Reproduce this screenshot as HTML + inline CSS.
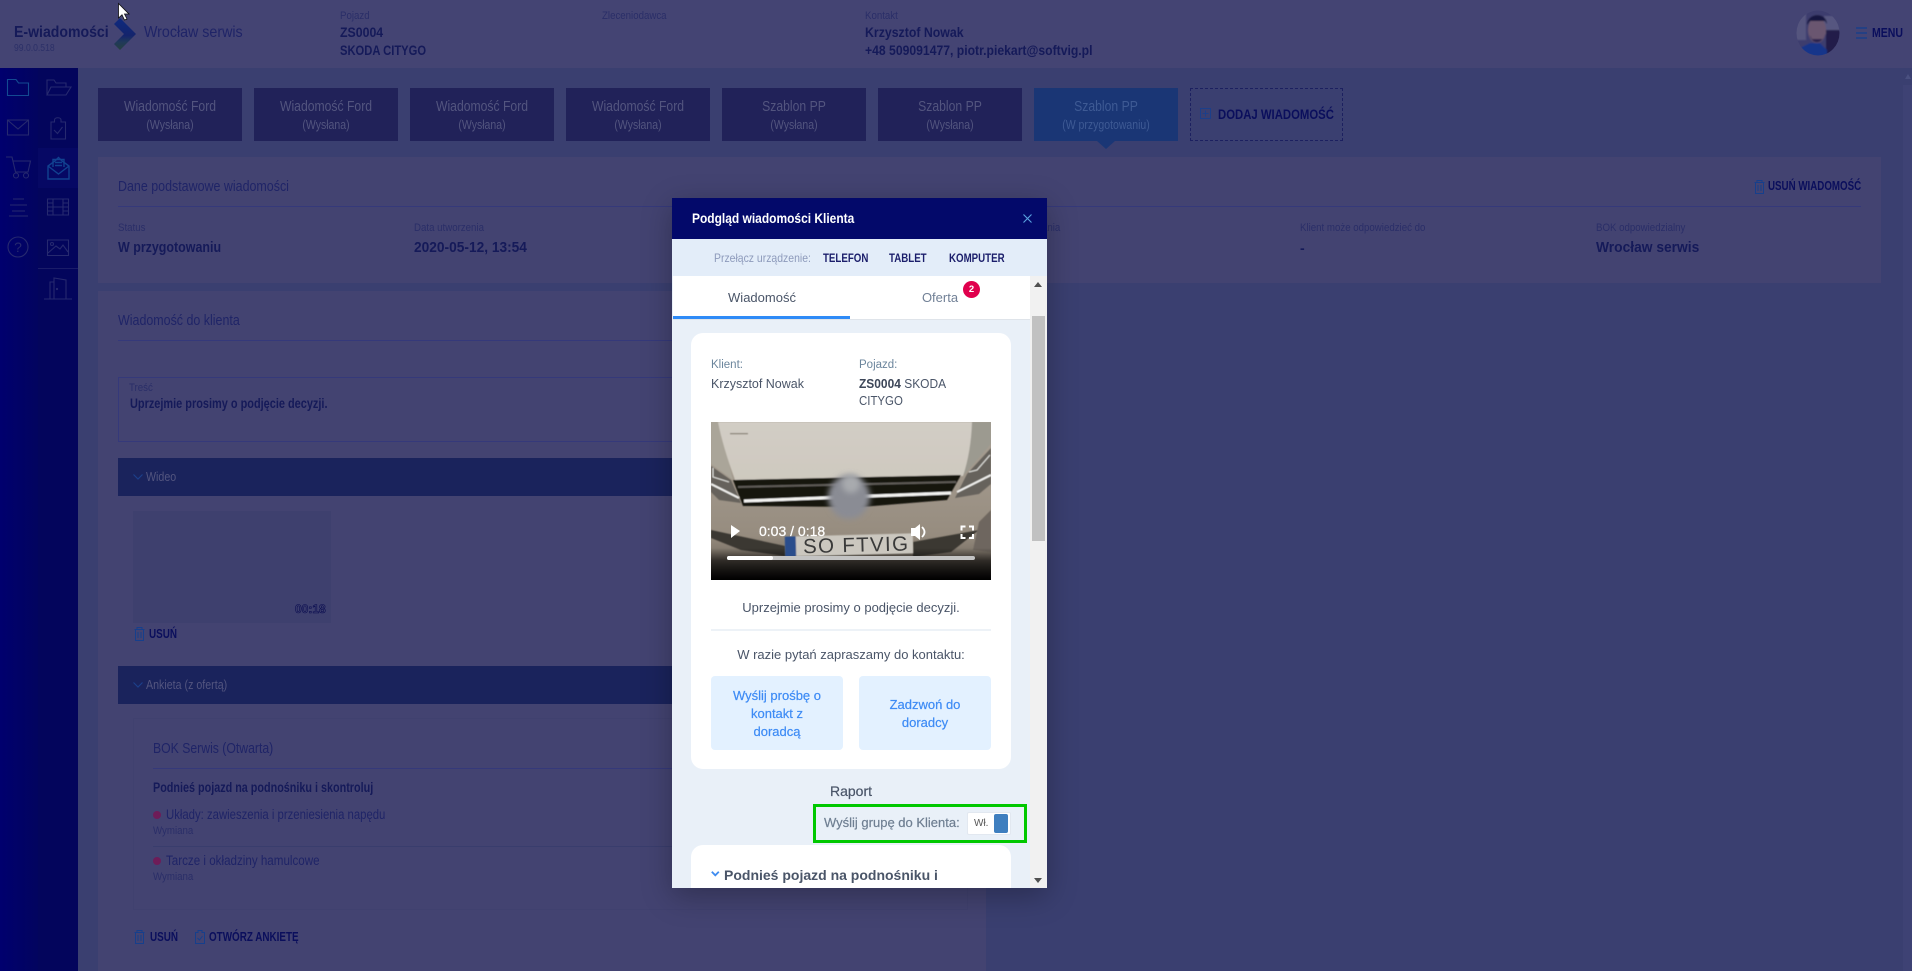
<!DOCTYPE html>
<html lang="pl"><head><meta charset="utf-8"><title>E-wiadomości</title>
<style>
html,body{margin:0;padding:0;width:1912px;height:971px;overflow:hidden;background:#3a3f70}
*{box-sizing:border-box}
body{font-family:"Liberation Sans",sans-serif;position:relative}
.a{position:absolute}
.t{position:absolute;white-space:nowrap;line-height:20px;height:20px;transform:scaleX(var(--x,1));transform-origin:0 50%}
.lb{font-size:11px;color:#2a2e68;--x:.88}
.v{font-size:14px;font-weight:700;color:#151a59}
.tab{position:absolute;top:88px;width:144px;height:53px;background:#212259;text-align:center;color:#53557f}
.tab b{display:block;font-weight:400;font-size:14.5px;line-height:18px;margin-top:10px;transform:scaleX(.84)}
.tab i{display:block;font-style:normal;font-size:12.5px;line-height:18px;transform:scaleX(.84)}
.line{position:absolute;height:1px;background:#35397a}
.bar{position:absolute;left:118px;width:850px;height:38px;background:#1a235c}
.act{font-size:13px;font-weight:700;color:#0a0e5c;--x:.76}
svg{position:absolute;overflow:visible}
.ic{fill:none;stroke:#26296f;stroke-width:1.1}
.m{font-family:"Liberation Sans",sans-serif}
.st{-webkit-text-stroke:.2px currentColor}
</style></head><body>
<!-- header -->
<div class="a" style="left:0;top:0;width:1912px;height:68px;background:#444473"></div>
<div class="t" style="left:14px;top:23px;font-size:16px;font-weight:700;color:#151a59;--x:.88">E-wiadomości</div>
<div class="t" style="left:14px;top:39px;font-size:10px;color:#2c3068;--x:.86">99.0.0.518</div>
<svg style="left:0;top:0" width="160" height="60"><defs><linearGradient id="lg" x1="0" y1="0" x2="0" y2="1"><stop offset="0" stop-color="#0e2a80"/><stop offset=".55" stop-color="#14246c"/><stop offset=".75" stop-color="#20395a"/><stop offset="1" stop-color="#26403f"/></linearGradient></defs><polygon points="114,24 120,18 136,34 120,50 114,44 124,34" fill="url(#lg)"/></svg>
<div class="t" style="left:144px;top:23px;font-size:16px;color:#1f2467;--x:.89">Wrocław serwis</div>
<div class="t lb" style="left:340px;top:6px">Pojazd</div>
<div class="t v" style="left:340px;top:22px;--x:.88">ZS0004</div>
<div class="t v" style="left:340px;top:40px;--x:.8">SKODA CITYGO</div>
<div class="t lb" style="left:602px;top:6px">Zleceniodawca</div>
<div class="t lb" style="left:865px;top:6px">Kontakt</div>
<div class="t v" style="left:865px;top:22px;--x:.88">Krzysztof Nowak</div>
<div class="t v" style="left:865px;top:40px;--x:.87">+48 509091477, piotr.piekart@softvig.pl</div>
<svg style="left:1796px;top:10px" width="44" height="46"><defs><clipPath id="av"><ellipse cx="22" cy="23" rx="21.5" ry="22.5"/></clipPath><filter id="avb"><feGaussianBlur stdDeviation=".7"/></filter></defs><g clip-path="url(#av)"><g filter="url(#avb)"><rect x="-2" y="-2" width="48" height="50" fill="#3d3e6e"/><rect x="-2" y="-2" width="12" height="32" fill="#55557e"/><rect x="28" y="6" width="18" height="18" fill="#565680"/><rect x="30" y="20" width="16" height="28" fill="#231a4a"/><path d="M4 48V38L14 33H24L31 40V48Z" fill="#12348a"/><ellipse cx="21" cy="20" rx="9" ry="13" fill="#6a5670"/><path d="M11 15C11 2 31 2 31 14L29 11H14Z" fill="#17143f"/><path d="M14 25C16 35 26 35 29 24L27 29H16Z" fill="#2a2350"/></g></g></svg>
<svg style="left:1856px;top:27px" width="12" height="12" stroke="#123f8f" stroke-width="1.2"><path d="M0 1H11M0 6H11M0 11H11"/></svg>
<div class="t" style="left:1872px;top:23px;font-size:13px;font-weight:700;color:#0a0e5c;--x:.81">MENU</div>

<!-- sidebar -->
<div class="a" style="left:0;top:68px;width:38px;height:903px;background:linear-gradient(90deg,#00006e,#02045f)"></div>
<div class="a" style="left:38px;top:68px;width:40px;height:903px;background:#03055c"></div>
<div class="a" style="left:38px;top:148px;width:40px;height:40px;background:#060864"></div>
<div class="a" style="left:38px;top:268px;width:40px;height:1px;background:#1a1c69"></div>
<svg class="ic" style="left:0;top:0" width="78" height="310">
<path d="M7.5 95.5V79.5H16L18.5 83H28.5V95.5Z" stroke="#134a92"/>
<path d="M47 95V80H54L56 83H66V87M47 95L51 87H71L66 95Z"/>
<path d="M7.5 120H28.5V135H7.5ZM7.5 120L18 129L28.5 120"/>
<path d="M51 122H54.500V120C54.500 117 61 117 61 120V122H65.500V139H51Z"/><path d="M54 130L57.500 133.500L62.500 127"/>
<path d="M6 157H12L15.500 172H28L30.500 161H13"/><circle cx="16" cy="175.500" r="2.500"/><circle cx="26" cy="175.500" r="2.500"/>
<g stroke="#114190" stroke-width="1.400"><path d="M48 166V179H69V166L62 161 58.500 157.500 55 161ZM48 166L58.500 174 69 166"/><path d="M53 167V159.500H64V167M55 162.500H62M55 165.500H62"/></g>
<path d="M13 199H24M10 205H27M12 211H25M9 216H28"/>
<path d="M47.500 199H68.500V215H47.500ZM53 199V215M63 199V215M47.500 203H53M47.500 207H53M47.500 211H53M63 203H68.500M63 207H68.500M63 211H68.500M53 207H63"/>
<circle cx="18" cy="247" r="10"/>
<path d="M47.500 240H68.500V255.500H47.500ZM48 253L56 246 60 249 63 245 68 252"/><circle cx="52" cy="244" r="1.500"/>
<path d="M44 299H72M50 299V282H54M54 278V299L66 299V280L54 278ZM66 282V299"/><circle cx="57" cy="289" r=".6"/>
</svg>
<div class="t" style="left:13px;top:237px;font-size:14px;color:#26296f;width:10px;text-align:center">?</div>

<!-- main tabs -->
<div class="tab" style="left:98px"><b>Wiadomość Ford</b><i>(Wysłana)</i></div>
<div class="tab" style="left:254px"><b>Wiadomość Ford</b><i>(Wysłana)</i></div>
<div class="tab" style="left:410px"><b>Wiadomość Ford</b><i>(Wysłana)</i></div>
<div class="tab" style="left:566px"><b>Wiadomość Ford</b><i>(Wysłana)</i></div>
<div class="tab" style="left:722px"><b>Szablon PP</b><i>(Wysłana)</i></div>
<div class="tab" style="left:878px"><b>Szablon PP</b><i>(Wysłana)</i></div>
<div class="tab" style="left:1034px;background:#1a3675;color:#3e5a94"><b>Szablon PP</b><i>(W przygotowaniu)</i></div>
<svg style="left:1097px;top:141px" width="18" height="8"><polygon points="0,0 18,0 9,8" fill="#1a3675"/></svg>
<div class="a" style="left:1190px;top:88px;width:153px;height:53px;border:1px dashed #1c2060"></div>
<svg style="left:1200px;top:108px;fill:none;stroke:#1c3f8a" width="12" height="12"><rect x=".5" y=".5" width="10" height="10"/><path d="M5.500 2.500V8.500M2.500 5.500H8.500"/></svg>
<div class="t act" style="left:1218px;top:104px;font-size:14px;--x:.81">DODAJ WIADOMOŚĆ</div>

<!-- panel 1 -->
<div class="a" style="left:98px;top:157px;width:1783px;height:126px;background:#434371"></div>
<div class="t" style="left:118px;top:177px;font-size:15px;color:#1f2467;--x:.83">Dane podstawowe wiadomości</div>
<div class="line" style="left:118px;top:206px;width:1743px"></div>
<svg style="left:1754px;top:180px;fill:none;stroke:#163f8c" width="11" height="14"><path d="M.5 2.500H10.500M3 2V.5H8V2M1.500 2.500V13.500H9.500V2.500M4 5V11M7 5V11"/></svg>
<div class="t act" style="left:1768px;top:176px;--x:.75">USUŃ WIADOMOŚĆ</div>
<div class="t lb" style="left:118px;top:218px">Status</div>
<div class="t v" style="left:118px;top:238px;font-size:15px;--x:.83">W przygotowaniu</div>
<div class="t lb" style="left:414px;top:218px">Data utworzenia</div>
<div class="t v" style="left:414px;top:238px;font-size:15px;--x:.915">2020-05-12, 13:54</div>
<div class="t lb" style="left:1000px;top:218px">Data wysłania</div>
<div class="t lb" style="left:1300px;top:218px">Klient może odpowiedzieć do</div>
<div class="t v" style="left:1300px;top:238px">-</div>
<div class="t lb" style="left:1596px;top:218px">BOK odpowiedzialny</div>
<div class="t v" style="left:1596px;top:238px;font-size:15px;--x:.92">Wrocław serwis</div>

<!-- panel 2 -->
<div class="a" style="left:98px;top:291px;width:888px;height:680px;background:#434371"></div>
<div class="t" style="left:118px;top:311px;font-size:15px;color:#1f2467;--x:.83">Wiadomość do klienta</div>
<div class="line" style="left:118px;top:340px;width:850px"></div>
<div class="a" style="left:118px;top:377px;width:850px;height:65px;border:1px solid #35397a"></div>
<div class="t lb" style="left:129px;top:378px">Treść</div>
<div class="t v" style="left:130px;top:394px;font-size:13.5px;--x:.81">Uprzejmie prosimy o podjęcie decyzji.</div>
<div class="bar" style="top:458px"></div>
<svg style="left:133px;top:474px;fill:none;stroke:#1c3f8a;stroke-width:1.200" width="10" height="6"><path d="M.5 .5L5 5 9.500 .5"/></svg>
<div class="t" style="left:146px;top:467px;font-size:13px;color:#53557f;--x:.82">Wideo</div>
<div class="a" style="left:133px;top:511px;width:198px;height:112px;background:#3e406e"></div>
<div class="t" style="left:295px;top:599px;font-size:12px;font-weight:700;color:#3e406e;-webkit-text-stroke:.6px #0a0c50">00:18</div>
<svg style="left:134px;top:627px;fill:none;stroke:#163f8c" width="11" height="14"><path d="M.5 2.500H10.500M3 2V.5H8V2M1.500 2.500V13.500H9.500V2.500M4 5V11M7 5V11"/></svg>
<div class="t act" style="left:149px;top:624px">USUŃ</div>
<div class="bar" style="top:666px"></div>
<svg style="left:133px;top:682px;fill:none;stroke:#1c3f8a;stroke-width:1.200" width="10" height="6"><path d="M.5 .5L5 5 9.500 .5"/></svg>
<div class="t" style="left:146px;top:675px;font-size:13px;color:#53557f;--x:.82">Ankieta (z ofertą)</div>
<div class="a" style="left:133px;top:718px;width:835px;height:192px;border:1px solid #40416f"></div>
<div class="t" style="left:153px;top:739px;font-size:15px;color:#1f2467;--x:.815">BOK Serwis (Otwarta)</div>
<div class="line" style="left:153px;top:768px;width:800px"></div>
<div class="t v" style="left:153px;top:778px;font-size:13.5px;--x:.8">Podnieś pojazd na podnośniku i skontroluj</div>
<div class="a" style="left:153px;top:811px;width:8px;height:8px;border-radius:50%;background:#6e1c58"></div>
<div class="t" style="left:166px;top:805px;font-size:13.5px;color:#1f2467;--x:.84">Układy: zawieszenia i przeniesienia napędu</div>
<div class="t lb" style="left:153px;top:821px">Wymiana</div>
<div class="line" style="left:153px;top:846px;width:800px;background:#393d6d"></div>
<div class="a" style="left:153px;top:857px;width:8px;height:8px;border-radius:50%;background:#6e1c58"></div>
<div class="t" style="left:166px;top:851px;font-size:13.5px;color:#1f2467;--x:.86">Tarcze i okładziny hamulcowe</div>
<div class="t lb" style="left:153px;top:867px">Wymiana</div>
<svg style="left:134px;top:930px;fill:none;stroke:#163f8c" width="11" height="14"><path d="M.5 2.500H10.500M3 2V.5H8V2M1.500 2.500V13.500H9.500V2.500M4 5V11M7 5V11"/></svg>
<div class="t act" style="left:150px;top:927px">USUŃ</div>
<svg style="left:195px;top:930px;fill:none;stroke:#163f8c" width="10" height="14"><path d="M.5 2.500H3V.5H7V2.500H9.500V13.500H.5Z"/><path d="M2.500 8L4.500 10 7.500 6"/></svg>
<div class="t act" style="left:209px;top:927px">OTWÓRZ ANKIETĘ</div>

<!-- page scrollbar -->
<div class="a" style="left:1903px;top:68px;width:9px;height:903px;background:#3e4274"></div>
<div class="a" style="left:1903px;top:68px;width:9px;height:17px;background:#3a3f70"></div>
<svg style="left:1905px;top:74px" width="8" height="5"><polygon points="0,5 6,5 3,0" fill="#4a5080"/></svg>

<!-- modal -->
<div class="a" style="left:672px;top:198px;width:375px;height:690px;background:#e9f0f8;box-shadow:0 8px 28px rgba(0,0,0,.28);overflow:hidden">
  <div class="a" style="left:0;top:0;width:375px;height:41px;background:#03096a"></div>
  <div class="t" style="left:20px;top:10px;font-size:14px;color:#fff;font-weight:700;--x:.855">Podgląd wiadomości Klienta</div>
  <svg style="left:351px;top:16px;fill:none;stroke:#5aa3e0;stroke-width:1.100" width="9" height="9"><path d="M.5 .5L8.500 8.500M8.500 .5L.5 8.500"/></svg>
  <div class="a" style="left:0;top:41px;width:375px;height:37px;background:#e3edf9"></div>
  <div class="t" style="left:42px;top:50px;font-size:12px;color:#8d9abb;--x:.87">Przełącz urządzenie:</div>
  <div class="t" style="left:151px;top:50px;font-size:12px;font-weight:700;color:#1b1e6b;--x:.81">TELEFON</div>
  <div class="t" style="left:217px;top:50px;font-size:12px;font-weight:700;color:#1b1e6b;--x:.81">TABLET</div>
  <div class="t" style="left:277px;top:50px;font-size:12px;font-weight:700;color:#1b1e6b;--x:.81">KOMPUTER</div>
  <!-- inner tabs -->
  <div class="a" style="left:1px;top:78px;width:357px;height:44px;background:#fff;border-bottom:1px solid #dfe4ea"></div>
  <div class="a" style="left:1px;top:118px;width:177px;height:3px;background:#2f8bf7"></div>
  <div class="t m" style="left:0;width:180px;text-align:center;top:90px;font-size:13px;color:#4a5568">Wiadomość</div>
  <div class="t m" style="left:178px;width:180px;text-align:center;top:90px;font-size:13px;color:#718096">Oferta</div>
  <div class="a" style="left:291px;top:83px;width:17px;height:17px;border-radius:50%;background:#e0004d;color:#fff;font-size:9.5px;font-weight:700;text-align:center;line-height:17px">2</div>
  <!-- scrollbar -->
  <div class="a" style="left:358px;top:78px;width:17px;height:612px;background:#f1f1f1"></div>
  <div class="a" style="left:360px;top:118px;width:13px;height:225px;background:#c1c1c1"></div>
  <svg style="left:362px;top:84px" width="9" height="6"><polygon points="0,5 8,5 4,0" fill="#505050"/></svg>
  <svg style="left:362px;top:680px" width="9" height="6"><polygon points="0,0 8,0 4,5" fill="#505050"/></svg>
  <!-- card 1 -->
  <div class="a" style="left:19px;top:135px;width:320px;height:436px;background:#fff;border-radius:12px"></div>
  <div class="t m" style="left:39px;top:157px;font-size:11.500px;color:#6b859c">Klient:</div>
  <div class="t m" style="left:39px;top:176px;font-size:13px;color:#4a5568;--x:.96">Krzysztof Nowak</div>
  <div class="t m" style="left:187px;top:157px;font-size:11.500px;color:#6b859c">Pojazd:</div>
  <div class="t m" style="left:187px;top:176px;font-size:13px;color:#4a5568;--x:.92"><b style="color:#3c4658">ZS0004</b> SKODA</div>
  <div class="t m" style="left:187px;top:193px;font-size:13px;color:#4a5568;--x:.88">CITYGO</div>
  <!-- video -->
  <svg style="left:39px;top:224px" width="280" height="158" viewBox="0 0 280 158">
    <defs>
      <linearGradient id="hd" x1="0" y1="0" x2="0" y2="1"><stop offset="0" stop-color="#d2cdc5"/><stop offset="1" stop-color="#cec9bf"/></linearGradient>
      <linearGradient id="bm" x1="0" y1="0" x2="0" y2="1"><stop offset="0" stop-color="#aaa195"/><stop offset=".72" stop-color="#968c7f"/><stop offset="1" stop-color="#5a5249"/></linearGradient>
      <linearGradient id="bt" x1="0" y1="0" x2="0" y2="1"><stop offset="0" stop-color="#000" stop-opacity="0"/><stop offset=".4" stop-color="#000" stop-opacity=".6"/><stop offset="1" stop-color="#000"/></linearGradient>
      <filter id="b1"><feGaussianBlur stdDeviation=".6"/></filter>
      <filter id="b2" x="-40%" y="-40%" width="180%" height="180%"><feGaussianBlur stdDeviation="3"/></filter>
      <clipPath id="vc"><rect width="280" height="158"/></clipPath>
    </defs>
    <g clip-path="url(#vc)">
    <rect width="280" height="158" fill="url(#bm)"/>
    <g filter="url(#b1)">
      <path d="M0 0H8L22 58 0 42Z" fill="#aaa599"/>
      <path d="M261 0H280V22L252 54Z" fill="#9c9a90"/>
      <path d="M7 0H261Q260 30 252 54L120 60 24 58Q12 25 7 0Z" fill="url(#hd)"/>
      <path d="M0 44L20 58 30 81 8 78 0 70Z" fill="#66625c"/>
      <path d="M0 62L28 76" stroke="#f2f2f0" stroke-width="2" fill="none"/>
      <path d="M2 46V55L18 60" stroke="#e4e4e0" stroke-width="1" fill="none"/>
      <path d="M280 26L256 52 244 76 268 72 280 62Z" fill="#66625c"/>
      <path d="M246 70L280 53" stroke="#f2f2f0" stroke-width="2" fill="none"/>
      <path d="M258 50L266 48 279 33" stroke="#e4e4e0" stroke-width="1" fill="none"/>
      <path d="M22 58L250 53 236 78 150 85 32 84Z" fill="#15130f"/>
      <path d="M27 65L245 60" stroke="#5e5b56" stroke-width="2" fill="none"/>
      <path d="M33 79L240 71" stroke="#f4f4f2" stroke-width="3" fill="none"/>
      <rect x="19" y="11" width="18" height="1.300" fill="#8a8378"/>
      <path d="M0 108L74 124V134L30 128 0 116Z" fill="#3b3733"/>
      <path d="M202 120L268 108 240 130 202 135Z" fill="#3b3733"/>
      <path d="M268 100L280 88V130L262 128Z" fill="#6e665e"/>
    </g>
    <ellipse cx="138" cy="75" rx="21" ry="22" fill="#8a8c94" filter="url(#b2)"/>
    <circle cx="140" cy="62" r="9" fill="#a8aaae" filter="url(#b2)"/>
    <rect y="126" width="280" height="32" fill="url(#bt)"/>
    <g filter="url(#b1)" transform="rotate(-1.500 138 123)">
      <rect x="74" y="113" width="128" height="20" fill="#cbc7bf"/>
      <rect x="74" y="113" width="11" height="20" fill="#2b4d8c"/>
    </g>
    <text x="92" y="130" font-family="Liberation Sans,sans-serif" font-size="20.500" fill="#3a3a3a" textLength="105" lengthAdjust="spacing" transform="rotate(-1.500 138 123)">SO FTVIG</text>
    <polygon points="20,103 29,109 20,116" fill="#fff"/>
    <text x="48" y="114" font-family="Liberation Sans,sans-serif" font-size="14" fill="#fff" style="paint-order:stroke" stroke="#fff" stroke-width=".25">0:03 / 0:18</text>
    <path d="M200 106H204L209 102V118L204 114H200Z" fill="#fff"/>
    <path d="M211 105Q216 110 211 115" stroke="#fff" stroke-width="1.800" fill="none"/>
    <path d="M250.500 108.500V104.500H254.500M258 104.500H262V108.500M262 112V116H258M254.500 116H250.500V112" stroke="#fff" stroke-width="2" fill="none"/>
    <rect x="16" y="134" width="248" height="4" rx="2" fill="#c3c3c3"/>
    <rect x="16" y="134" width="46" height="4" rx="2" fill="#fff"/>
    </g>
  </svg>
  <div class="t m" style="left:39px;width:280px;text-align:center;top:400px;font-size:13px;color:#4a5568">Uprzejmie prosimy o podjęcie decyzji.</div>
  <div class="a" style="left:39px;top:431px;width:280px;height:2px;background:#edf2f7"></div>
  <div class="t m" style="left:39px;width:280px;text-align:center;top:447px;font-size:13px;color:#4a5568">W razie pytań zapraszamy do kontaktu:</div>
  <div class="a m st" style="left:39px;top:478px;width:132px;height:74px;background:#e3f1ff;border-radius:4px;color:#3d8bf5;font-size:13px;line-height:18px;text-align:center;padding-top:11px">Wyślij prośbę o<br>kontakt z<br>doradcą</div>
  <div class="a m st" style="left:187px;top:478px;width:132px;height:74px;background:#e3f1ff;border-radius:4px;color:#3d8bf5;font-size:13px;line-height:18px;text-align:center;padding-top:20px">Zadzwoń do<br>doradcy</div>
  <div class="t m st" style="left:19px;width:320px;text-align:center;top:583px;font-size:14px;color:#4a5568">Raport</div>
  <div class="a" style="left:141px;top:606px;width:214px;height:39px;border:3px solid #00c800"></div>
  <div class="t m st" style="left:152px;top:615px;font-size:13px;color:#6f7f92">Wyślij grupę do Klienta:</div>
  <div class="a" style="left:295px;top:614px;width:44px;height:23px;background:#fff;border:1px solid #e2e8f0;border-radius:2px"></div>
  <div class="t" style="left:302px;top:616px;font-size:10px;color:#555">Wł.</div>
  <div class="a" style="left:322px;top:616px;width:14px;height:19px;background:#3f7fbf;border-radius:2px"></div>
  <!-- card 2 -->
  <div class="a" style="left:19px;top:647px;width:320px;height:60px;background:#fff;border-radius:12px 12px 0 0"></div>
  <svg style="left:39px;top:673px;fill:none;stroke:#3f8cf0;stroke-width:1.800" width="9" height="6"><path d="M.8 .8L4.300 4.300 7.800 .8"/></svg>
  <div class="t m" style="left:52px;top:667px;font-size:14px;font-weight:700;color:#4a5568">Podnieś pojazd na podnośniku i</div>
</div>

<!-- cursor -->
<svg style="left:117px;top:2px" width="14" height="20"><path d="M1.500 1.500V16L5 12.800 7.500 18 10 17 7.500 12H12Z" fill="#fff" stroke="#111" stroke-width=".8"/></svg>
</body></html>
